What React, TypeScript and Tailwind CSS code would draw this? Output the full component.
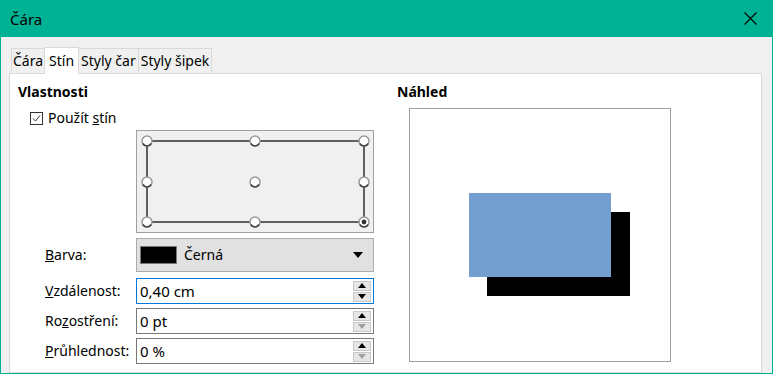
import React from "react";

const font = { fontFamily: '"Noto Sans", "Open Sans", sans-serif' };

function Handle({ x, y, sel }: { x: number; y: number; sel?: boolean }) {
  return (
    <g>
      <circle cx={x} cy={y} r={5} fill="#ffffff" stroke="#9a9a9a" strokeWidth={1.5} />
      <path d={`M ${x - 4.3} ${y + 2.5} A 5 5 0 0 0 ${x + 4.3} ${y + 2.5}`} stroke="#444" strokeWidth={1.5} fill="none" />
      {sel && <circle cx={x} cy={y} r={2.4} fill="#333" />}
    </g>
  );
}

function Spin({ downDisabled }: { downDisabled?: boolean }) {
  return (
    <div className="flex flex-col gap-[1px] mr-[2px]">
      <div className="w-[18px] h-[10px] bg-[#e6e6e6] border border-[#c8c8c8] flex items-center justify-center">
        <svg width="8" height="5" viewBox="0 0 8 5"><path d="M0 5 L4 0 L8 5 Z" fill="#000" /></svg>
      </div>
      <div className="w-[18px] h-[10px] bg-[#e6e6e6] border border-[#c8c8c8] flex items-center justify-center">
        <svg width="8" height="5" viewBox="0 0 8 5"><path d="M0 0 L4 5 L8 0 Z" fill={downDisabled ? "#a0a0a0" : "#000"} /></svg>
      </div>
    </div>
  );
}

function Field({ value, focused, downDisabled }: { value: string; focused?: boolean; downDisabled?: boolean }) {
  return (
    <div className={`w-[238px] h-[26px] bg-white border flex items-center justify-between ${focused ? "border-[#0078d7]" : "border-[#7a7a7a]"}`}>
      <span className="pl-[3px] text-[15px] leading-[18px] text-black">{value}</span>
      <Spin downDisabled={downDisabled} />
    </div>
  );
}

export default function App() {
  return (
    <div className="w-[773px] h-[374px] flex flex-col bg-[#00b294] overflow-hidden" style={font}>
      <div className="h-[37px] flex items-center justify-between pl-[10px] pr-[16px]">
        <span className="text-[15px] text-black leading-[20px]">Čára</span>
        <svg width="13" height="13" viewBox="0 0 13 13">
          <path d="M0.5 0.5 L12.5 12.5 M12.5 0.5 L0.5 12.5" stroke="#000" strokeWidth="1.1" />
        </svg>
      </div>
      <div className="flex-1 mx-[1px] mb-[1px] bg-[#f0f0f0] flex flex-col pt-[9px]">
        <div className="flex items-end pl-[10px] h-[27px] text-[14px] leading-[18px] text-black">
          <div className="h-[25px] px-[1px] border border-b-0 border-[#d9d9d9] flex items-center">Čára</div>
          <div className="h-[27px] px-[4px] border border-b-0 border-[#d9d9d9] bg-white flex items-center relative top-[1px] -mx-[1px] z-10">Stín</div>
          <div className="h-[25px] px-[2px] border border-b-0 border-[#d9d9d9] flex items-center">Styly čar</div>
          <div className="h-[25px] px-[2px] border border-b-0 border-l-0 border-[#d9d9d9] flex items-center">Styly šipek</div>
        </div>
        <div className="ml-[8px] w-[753px] flex-1 bg-white border border-[#d9d9d9] flex text-[14px] leading-[18px] text-black">
          <div className="w-[378px] pl-[8px] pt-[9px] flex flex-col">
            <div className="font-bold">Vlastnosti</div>
            <div className="flex items-center mt-[8px] ml-[12px] h-[18px]">
              <svg width="13" height="13" viewBox="0 0 13 13">
                <rect x="0.5" y="0.5" width="12" height="12" fill="#fff" stroke="#333" />
                <path d="M3 6.5 L5.5 9 L10 3.5" stroke="#333" strokeWidth="1" fill="none" />
              </svg>
              <span className="ml-[5px]">Použít <span className="underline">s</span>tín</span>
            </div>
            <div className="ml-[118px] mt-[3px] w-[238px] h-[103px] border border-[#a0a0a0] bg-[#f0f0f0]">
              <svg width="236" height="101" viewBox="0 0 236 101">
                <rect x="10" y="10" width="217" height="81" fill="none" stroke="#000" strokeWidth="1.2" />
                <Handle x={10} y={10} />
                <Handle x={118} y={10} />
                <Handle x={227} y={10} />
                <Handle x={10} y={51} />
                <Handle x={118} y={51} />
                <Handle x={227} y={51} />
                <Handle x={10} y={91} />
                <Handle x={118} y={91} />
                <Handle x={227} y={91} sel />
              </svg>
            </div>
            <div className="grid grid-cols-[91px_238px] pl-[27px] mt-[5px] items-center">
              <span><span className="underline">B</span>arva:</span>
              <div className="h-[34px] bg-[#e1e1e1] border border-[#adadad] flex items-center pl-[3px] pr-[10px]">
                <div className="w-[37px] h-[18px] bg-black border border-[#777]" />
                <span className="ml-[7px] flex-1">Černá</span>
                <svg width="10" height="6" viewBox="0 0 10 6"><path d="M0 0 L10 0 L5 6 Z" fill="#000" /></svg>
              </div>
              <span className="mt-[6px]"><span className="underline">V</span>zdálenost:</span>
              <div className="mt-[6px]"><Field value="0,40 cm" focused /></div>
              <span className="mt-[4px]">Ro<span className="underline">z</span>ostření:</span>
              <div className="mt-[4px]"><Field value="0 pt" downDisabled /></div>
              <span className="mt-[4px]"><span className="underline">P</span>růhlednost:</span>
              <div className="mt-[4px]"><Field value="0 %" downDisabled /></div>
            </div>
          </div>
          <div className="pl-[9px] pt-[9px] flex flex-col">
            <div className="font-bold">Náhled</div>
            <div className="ml-[12px] mt-[7px] w-[262px] h-[254px] border border-[#a0a0a0] bg-white">
              <svg width="260" height="252" viewBox="0 0 260 252">
                <rect x="77" y="103" width="143" height="84" fill="#000" />
                <rect x="59" y="84" width="142" height="84" fill="#729fcf" />
              </svg>
            </div>
          </div>
        </div>
      </div>
    </div>
  );
}
